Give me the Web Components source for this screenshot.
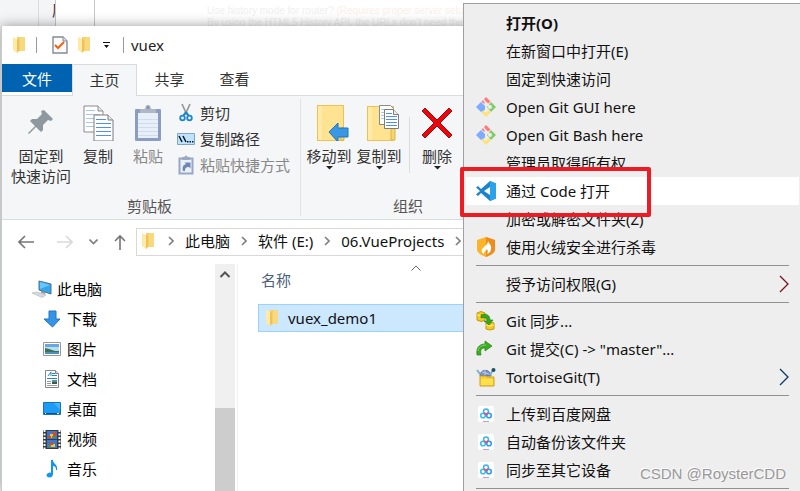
<!DOCTYPE html>
<html lang="zh-CN">
<head>
<meta charset="utf-8">
<meta name="viewport" content="width=device-width, initial-scale=1">
<title>vuex</title>
<style>
    body {
        margin: 0;
        font: 15px/20px "Noto Sans", "Noto Sans CJK SC", sans-serif;
        color: #111;
        background: #fff;
    }
</style>
</head>
<body>
<desktop-stage>
    <page-backdrop slot="backdrop">
        <span slot="fragment">原</span>
        <span slot="question">Use history mode for router? </span>
        <span slot="note">(Requires proper server setup</span>
        <span slot="hint">By using the HTML5 History API, the URLs don't need the</span>
    </page-backdrop>

    <explorer-window>
        <title-bar slot="title">vuex</title-bar>
        <ribbon-tabs slot="tabs"></ribbon-tabs>

        <ribbon-group slot="ribbon" label="剪贴板">
            <ribbon-button icon="pin" wide>固定到<br>快速访问</ribbon-button>
            <ribbon-button icon="copy">复制</ribbon-button>
            <ribbon-button icon="paste" disabled>粘贴</ribbon-button>
            <ribbon-stack>
                <ribbon-button small icon="cut">剪切</ribbon-button>
                <ribbon-button small icon="path">复制路径</ribbon-button>
                <ribbon-button small icon="shortcut" disabled>粘贴快捷方式</ribbon-button>
            </ribbon-stack>
        </ribbon-group>
        <ribbon-group slot="ribbon" label="组织">
            <ribbon-button icon="moveTo" drop>移动到</ribbon-button>
            <ribbon-button icon="copyTo" drop>复制到</ribbon-button>
            <ribbon-rule></ribbon-rule>
            <ribbon-button icon="delete" drop>删除</ribbon-button>
            <ribbon-button></ribbon-button>
        </ribbon-group>

        <address-bar slot="address"></address-bar>

        <nav-tree slot="tree">
            <tree-item icon="computer" root>此电脑</tree-item>
            <tree-item icon="download">下载</tree-item>
            <tree-item icon="picture">图片</tree-item>
            <tree-item icon="document">文档</tree-item>
            <tree-item icon="desktop">桌面</tree-item>
            <tree-item icon="video">视频</tree-item>
            <tree-item icon="music">音乐</tree-item>
        </nav-tree>

        <file-list slot="files"></file-list>
    </explorer-window>

    <context-menu slot="menu">
        <menu-item strong>打开(O)</menu-item>
        <menu-item>在新窗口中打开(E)</menu-item>
        <menu-item>固定到快速访问</menu-item>
        <menu-item icon="git">Open Git GUI here</menu-item>
        <menu-item icon="git">Open Git Bash here</menu-item>
        <menu-item>管理员取得所有权</menu-item>
        <menu-item icon="code" active>通过 Code 打开</menu-item>
        <menu-item>加密或解密文件夹(Z)</menu-item>
        <menu-item icon="shield">使用火绒安全进行杀毒</menu-item>
        <menu-rule></menu-rule>
        <menu-item submenu="#7a1420">授予访问权限(G)</menu-item>
        <menu-rule></menu-rule>
        <menu-item icon="sync">Git 同步...</menu-item>
        <menu-item icon="commit">Git 提交(C) -&gt; "master"...</menu-item>
        <menu-item icon="tortoise" submenu="#0b3a66">TortoiseGit(T)</menu-item>
        <menu-rule></menu-rule>
        <menu-item icon="netdisk">上传到百度网盘</menu-item>
        <menu-item icon="netdisk">自动备份该文件夹</menu-item>
        <menu-item icon="netdisk">同步至其它设备</menu-item>
        <menu-rule></menu-rule>
    </context-menu>

    <image-credit slot="credit">CSDN @RoysterCDD</image-credit>
</desktop-stage>

<script>
// [width, height, markup]
const ICONS = {
    folder: [13, 18, `
        <path d="M4 1h8v14H4z" fill="#f5cf6b"/>
        <path d="M7 1h5v14H7z" fill="#f9d97d"/>
        <path d="M0 1l4 2v14l-4-3z" fill="#ffe9a6"/>
        <path d="M4 3v14l2-2V4z" fill="#eec25a"/>`],
    check: [16, 18, `
        <path d="M1 1h10l4 4v12H1z" fill="#fbfbfb" stroke="#858b94" stroke-width="1.4"/>
        <path d="M11 1v4h4" fill="#dfe3e8" stroke="#858b94"/>
        <path d="M3 9l3 3 6-6" fill="none" stroke="#f06010" stroke-width="2"/>`],
    quickDrop: [7, 7, `<path d="M0 0h7v1H0zM1 3h5L3.500 6z" fill="#111"/>`],
    drop: [7, 4, `<path d="M0 0h7L3.500 3.500z" fill="#222"/>`],
    pin: [26, 36, `
        <path d="M16 5l9 9-2 2-3-1-5 5 0 5-2 2-5-5-7 7-1-1 7-7-5-5 2-2 5 0 5-5-1-3z" fill="#8d989f"/>`],
    copy: [32, 36, `
        <path d="M2 1h14l5 5v21H2z" fill="#fff" stroke="#8b8b8b"/>
        <path d="M16 1v5h5" fill="#e8e8e8" stroke="#8b8b8b"/>
        <path d="M4 5.500h9M4 9.500h14M4 13.500h14M4 17.500h14M4 21.500h14" stroke="#a9c6f5"/>
        <path d="M12 10h14l5 5v21H12z" fill="#fff" stroke="#7d7d7d"/>
        <path d="M26 10v5h5" fill="#e8e8e8" stroke="#7d7d7d"/>
        <path d="M14 14.500h10M14 18.500h15M14 22.500h15M14 26.500h15M14 30.500h15" stroke="#4f8fee"/>`],
    paste: [28, 36, `
        <rect x="1" y="4" width="26" height="32" rx="1" fill="#8b9dc3"/>
        <path d="M4 8h20v25H4z" fill="#e9eff8"/>
        <path d="M4 14.500h20M4 18.500h20M4 22.500h20M4 26.500h20M4 30.500h20" stroke="#d0dcee"/>
        <path d="M6 4h4l2-1h4l2 1h4v4H6z" fill="#b0b8c6"/>
        <circle cx="14" cy="2.500" r="2.500" fill="#a3abc0"/>
        <circle cx="14" cy="2.500" r="1" fill="#6f83ae"/>`],
    cut: [18, 20, `
        <path d="M5 1l5 11M13 1L8 12" stroke="#9b9b9b" stroke-width="1.800" fill="none"/>
        <path d="M9 9l-3 4M9 9l3 4" stroke="#1a87cc" stroke-width="2" fill="none"/>
        <circle cx="5.500" cy="15" r="2.300" fill="none" stroke="#1a87cc" stroke-width="1.800"/>
        <circle cx="12.500" cy="15" r="2.300" fill="none" stroke="#1a87cc" stroke-width="1.800"/>`],
    path: [18, 12, `
        <path d="M.5.5h17v11H.5z" fill="#bfe3fb" stroke="#7fa6c4"/>
        <path d="M2 3l3 6M6 3l3 6" stroke="#0c1a26" stroke-width="1.500"/>
        <path d="M10 8h1.500v1.500H10zM12.500 8H14v1.500h-1.500zM15 8h1.500v1.500H15z" fill="#0c1a26"/>`],
    shortcut: [18, 20, `
        <path d="M2.500 3.500h13v15h-13z" fill="#eaf0f8" stroke="#98a7c4" stroke-width="2"/>
        <path d="M5 2h2.500a1.500 1.500 0 0 1 3 0H13v3H5z" fill="#9ba9c4"/>
        <path d="M6 16c-1-4 0-6 3-7L7.500 7.500h6v6L12 12c-3 0-4 1-4 4z" fill="#6f86b5"/>`],
    moveTo: [40, 36, `
        <path d="M8 0h27v36H8z" fill="#e9c455"/><path d="M9 1h25v34H9z" fill="#ffe391"/>
        <path d="M9 1h4v34H9z" fill="#ffeaa8"/>
        <path d="M31 35V24l3-2 1 1v12z" fill="#f6d470" stroke="#dcb544"/>
        <path d="M20 27l9-9v5h10v9H29v5z" fill="#3a97e4" stroke="#1f74bd"/>`],
    copyTo: [40, 36, `
        <path d="M8 1h27v35H8z" fill="#e9c455"/><path d="M9 2h25v33H9z" fill="#ffe391"/>
        <path d="M9 2h4v33H9z" fill="#ffeaa8"/>
        <path d="M32 35V25q2-4 4-1v11z" fill="#f6d470" stroke="#dcb544"/>
        <path d="M20.500.5h11l3 3v16h-14z" fill="#fff" stroke="#8b8b8b"/>
        <path d="M22 4.500h7M22 7.500h9M22 10.500h9M22 13.500h9" stroke="#a9c6f5"/>
        <path d="M25.500 4.500h9l5 5v14h-14z" fill="#fff" stroke="#7d7d7d"/>
        <path d="M34.500 4.500v5h5" fill="#eee" stroke="#7d7d7d"/>
        <path d="M27 8.500h6M27 11.500h11M27 14.500h11M27 17.500h11M27 20.500h11" stroke="#4f8fee"/>`],
    delete: [32, 36, `
        <path d="M4 3l12 12L28 3l3 3-12 12 12 12-3 3-12-12L4 33l-3-3 12-12L1 6z" fill="#e8080c" stroke="#a8090d"/>`],
    back: [16, 14, `<path d="M7 1L1 7l6 6M1 7h15" fill="none" stroke="#757575" stroke-width="1.600"/>`],
    forward: [16, 14, `<path d="M9 1l6 6-6 6M15 7H0" fill="none" stroke="#d9d9d9" stroke-width="1.600"/>`],
    recent: [9, 6, `<path d="M.5.5l4 4 4-4" fill="none" stroke="#808080" stroke-width="1.600"/>`],
    up: [12, 16, `<path d="M1 7l5-5 5 5M6 2v14" fill="none" stroke="#757575" stroke-width="1.600"/>`],
    crumb: [6, 10, `<path d="M1 1l4 4-4 4" fill="none" stroke="#808080" stroke-width="1.600"/>`],
    scrollUp: [12, 8, `<path d="M1.500 7L6 2.500 10.500 7" fill="none" stroke="#555" stroke-width="2"/>`],
    sort: [10, 6, `<path d="M.5 5.500L5 1l4.500 4.500" fill="none" stroke="#666"/>`],
    computer: [20, 18, `
        <path d="M7 1l12 3v10L7 10z" fill="#35a6ee" stroke="#4d7088"/>
        <path d="M8 2l10 3-10 4z" fill="#67c6fb"/>
        <path d="M9 11l5 1-1 2-4-1z" fill="#8f9aa3"/>
        <path d="M0 13l5-1 9 3-4 2.500z" fill="#d4dadf" stroke="#adb5bb" stroke-width=".6"/>`],
    download: [18, 18, `<path d="M6 1h7v8h4l-7.500 8L1 9h5z" fill="#3494e6" stroke="#2373c2"/>`],
    picture: [18, 14, `
        <path d="M.5.5h17v13H.5z" fill="#fff" stroke="#999"/>
        <path d="M2 2h14v10H2z" fill="#b5ddf5"/><path d="M2 2h14v3H2z" fill="#6aa6e0"/>
        <path d="M2 6l4 1 6 2 4 0v1H2z" fill="#3f7156"/>
        <path d="M2 10h14v2H2z" fill="#4f92b9"/>`],
    document: [16, 18, `
        <path d="M1.500.5h10l3 3v14h-13z" fill="#fff" stroke="#858585"/>
        <path d="M11.500.5v3h3" fill="#ddd" stroke="#858585"/>
        <path d="M4 6l3-4v4M8 3.500h3M8 5.500h5M3 8.500h10" stroke="#2182d2" fill="none"/>
        <path d="M3 11.500h4M3 13.500h4M3 15.500h10" stroke="#999"/>
        <path d="M8 10h5v4H8z" fill="#598cb0"/><path d="M8 12h5v2H8z" fill="#395f45"/>`],
    desktop: [18, 14, `
        <path d="M.5.5h17v12H.5z" fill="#1c9cf5" stroke="#1873b5"/>
        <path d="M11 1h6v7z" fill="#43b5ff"/>
        <path d="M1 11h16v1H1z" fill="#0c5186"/>
        <path d="M2 11.500h1M14 11.500h2" stroke="#fff"/>`],
    video: [18, 19, `
        <path d="M0 0h18v19H0z" fill="#3b3b3b"/>
        <path d="M1.500 0v19M16.500 0v19" stroke="#fff" stroke-width="2" stroke-dasharray="2 1.500"/>
        <path d="M4 1h10v8H4zM4 10h10v8H4z" fill="#3f77cc"/>
        <path d="M7 4h4v4H7zM8 14h4v3H8z" fill="#ecc72e"/>
        <path d="M10 2h3v4h-3zM5 6h3v2H5zM7 12h3v3H7z" fill="#d54535"/>
        <path d="M9 6h3v2H9zM5 15h3v2H5z" fill="#4d9a3a"/>`],
    music: [14, 18, `
        <path d="M6 0h2c0 4 5 4 4 10h-1c0-3-1-4-3-4v8c0 5-7 4-6.500 1C2 13 5 12 6 13z" fill="#1295ef"/>`],
    git: [20, 20, `
        <path d="M10 0l4.500 4.500-4.500 4-4.500-4z" fill="#ff7b7b"/>
        <path d="M0 10l5-5 4 4v5l-4 1z" fill="#7bacff"/>
        <path d="M15 5l5 5-5 5-4-5z" fill="#82cc68"/>
        <path d="M5 15l5-3 5 3-5 5z" fill="#ffe07a"/>
        <path d="M7 2l3 4 5 4M10 6v9" fill="none" stroke="#eee" stroke-width="1.500"/>
        <circle cx="10" cy="6.500" r="1.500" fill="#eee"/><circle cx="14" cy="10" r="2" fill="#eee"/>
        <circle cx="10" cy="14" r="1.800" fill="#eee"/>`],
    code: [20, 20, `
        <path d="M14 0l6 2.500v15L14 20 5 12l-3 3-2-1.500L4 10 0 6.500 2 5l3 3z" fill="#1a85cc"/>
        <path d="M14 0l6 2.500v15L14 20z" fill="#2ba3ea"/>
        <path d="M14 6v8l-6-4z" fill="#fff"/>`],
    shield: [18, 20, `
        <path d="M9 0l9 3v9c0 4-4 6-9 8-5-2-9-4-9-8V3z" fill="#fbb42a"/>
        <path d="M9 0l9 3v9c0 4-4 6-9 8z" fill="#f08c1c"/>
        <path d="M11 4c1 3 4 4 3 8 0 3-2 4-4 5 1-2 1-3 0-5-1 2-3 2-3 5-4-3-2-5 0-7 1-1 4-3 4-6z" fill="#fff"/>`],
    sync: [20, 20, `
        <path d="M1 2q4-3 8 0v7q-4 3-8 0z" fill="#f3cb20" stroke="#c49a14"/>
        <path d="M10 12q4-3 8 0v6q-4 2-8 0z" fill="#f3cb20" stroke="#c49a14"/>
        <path d="M1 4q4 2 8 0M10 14q4 2 8 0" stroke="#fff08b" fill="none"/>
        <path d="M5 4c5-2 9 0 9 5h3l-4 5-5-4h3c0-3-2-4-6-3z" fill="#35a91d" stroke="#21770f" stroke-width=".6"/>`],
    commit: [20, 20, `
        <path d="M1 16C0 9 3 5 9 5V2l7 5-7 5V9c-4 0-5 2-4 7z" fill="#3aae20" stroke="#2a7c1b" stroke-width=".7"/>
        <path d="M2 12c1-4 3-6 8-6" fill="none" stroke="#7adc62"/>`],
    tortoise: [20, 20, `
        <path d="M4 9c0-7 10-8 11 0z" fill="#7896cd" stroke="#5a6f97"/>
        <path d="M9 3v5M6 5l7 2" stroke="#b9c9ea"/>
        <path d="M1 3l3 4M14 8l3-5" stroke="#82add1" stroke-width="2"/>
        <circle cx="17.500" cy="3" r="2" fill="#1f5166"/>
        <path d="M4 9h6l1 1h7v9H4z" fill="#f7cf37" stroke="#cfa11e"/>
        <path d="M5 12h12v6H5z" fill="#ffdf4d"/>`],
    netdisk: [16, 16, `
        <rect width="16" height="16" rx="2" fill="#fff"/>
        <circle cx="8" cy="5.500" r="2.400" fill="none" stroke="#3eb2f4" stroke-width="1.500"/>
        <circle cx="5" cy="9.500" r="2.300" fill="none" stroke="#35bff2" stroke-width="1.600"/>
        <circle cx="11" cy="9.500" r="2.300" fill="none" stroke="#2f9bf0" stroke-width="1.600"/>
        <path d="M6 7l2 1.500L10 7" fill="none" stroke="#f0506a" stroke-width="1.600"/>
        <path d="M5 15.500h3" stroke="#f58a9a"/><path d="M8 15.500h3" stroke="#7fb9f5"/>`]
};

function icon(name) {
    if (!ICONS[name]) return '';
    const [w, h, body] = ICONS[name];
    return `<svg width="${w}" height="${h}" viewBox="0 0 ${w} ${h}" aria-hidden="true">${body}</svg>`;
}

class BaseElement extends HTMLElement {
    constructor() {
        super();
        this.attachShadow({ mode: 'open' });
    }

    connectedCallback() {
        this.shadowRoot.innerHTML = `
            <style>
                *, *::before, *::after { box-sizing: border-box; }
                button { font: inherit; color: inherit; background: none; border: 0; padding: 0; margin: 0; text-align: inherit; }
                svg { display: block; flex: none; }
            </style>
            ${this.render()}
        `;
    }
}

class DesktopStage extends BaseElement {
    render() {
        return `
            <style>
                :host {
                    display: grid;
                    position: relative;
                    min-height: 100vh;
                    max-height: 100vh;
                    overflow: hidden;
                }

                .backdrop,
                .window {
                    grid-area: 1 / 1;
                    min-width: 0;
                    display: grid;
                }

                .window {
                    margin: 26px 0 0 1px;
                    z-index: 1;
                }

                .menu {
                    position: absolute;
                    z-index: 2;
                    top: 3px;
                    left: 463px;
                    right: 0;
                }

                .credit {
                    position: absolute;
                    z-index: 3;
                    right: 14px;
                    bottom: 7px;
                }
            </style>
            <div class="backdrop"><slot name="backdrop"></slot></div>
            <main class="window"><slot></slot></main>
            <div class="menu"><slot name="menu"></slot></div>
            <div class="credit"><slot name="credit"></slot></div>
        `;
    }
}

class PageBackdrop extends BaseElement {
    render() {
        return `
            <style>
                :host {
                    display: grid;
                    grid-template-columns: 39px 17px 39px 1fr;
                    background: #fff;
                    overflow: hidden;
                    white-space: nowrap;
                }

                .rail { background: #f4f5f7; border-right: 1px solid #dcdde0; }
                .gutter { background: #f4f5f7; border-right: 1px solid #c8c8c8; overflow: hidden; padding-left: 13px; color: #4a2540; }
                .margin { border-right: 1px solid #c8c8c8; }
                .text { padding: 5px 0 0 112px; font: 10px/12px "Liberation Sans", sans-serif; color: #f0f0f0; }
                .note { color: #fbf0ea; }
            </style>
            <div class="rail"></div>
            <div class="gutter"><slot name="fragment"></slot></div>
            <div class="margin"></div>
            <div class="text">
                <div><slot name="question"></slot><span class="note"><slot name="note"></slot></span></div>
                <div><slot name="hint"></slot></div>
            </div>
        `;
    }
}

class ExplorerWindow extends BaseElement {
    render() {
        return `
            <style>
                :host {
                    display: grid;
                    grid-template-rows: auto auto auto auto 1fr;
                    min-width: 0;
                    background: #fff;
                    border-left: 1px solid #c9c9c9;
                    box-shadow: 0 0 12px rgba(0, 0, 0, 0.4);
                }

                .ribbon {
                    display: flex;
                    height: 124px;
                    background: #f5f6f7;
                    border-bottom: 1px solid #dadbdc;
                }

                .body {
                    display: grid;
                    grid-template-columns: 236px 1fr;
                    overflow: hidden;
                }
            </style>
            <slot name="title"></slot>
            <slot name="tabs"></slot>
            <div class="ribbon"><slot name="ribbon"></slot></div>
            <slot name="address"></slot>
            <div class="body">
                <slot name="tree"></slot>
                <slot name="files"></slot>
            </div>
        `;
    }
}

class TitleBar extends BaseElement {
    render() {
        return `
            <style>
                :host {
                    display: flex;
                    align-items: center;
                    height: 38px;
                    padding-left: 11px;
                    color: #222;
                }

                button { margin-right: 10px; }
                .drop { margin: 0 13px 0 2px; }
                .rule { width: 1px; height: 16px; background: #999; }
                .gap { margin-right: 15px; }
                h1 { margin: 0 0 0 7px; font: inherit; }
            </style>
            <button aria-label="窗口">${icon('folder')}</button>
            <span class="rule gap"></span>
            <button aria-label="属性">${icon('check')}</button>
            <button aria-label="新建文件夹">${icon('folder')}</button>
            <button class="drop" aria-label="自定义快速访问工具栏">${icon('quickDrop')}</button>
            <span class="rule"></span>
            <h1><slot></slot></h1>
        `;
    }
}

class RibbonTabs extends BaseElement {
    render() {
        return `
            <style>
                :host {
                    display: flex;
                    height: 32px;
                    color: #333;
                }

                button {
                    width: 65px;
                    padding-bottom: 2px;
                    text-align: center;
                    border-bottom: 1px solid #dadbdc;
                }

                .file {
                    width: 70px;
                    color: #fff;
                    background: linear-gradient(#0063b1 28px, #fff 28px);
                }

                .current {
                    background: #f5f6f7;
                    border: 1px solid #dadbdc;
                    border-bottom: 0;
                }

                .rest { flex: 1; border-bottom: 1px solid #dadbdc; }
            </style>
            <button class="file">文件</button>
            <button class="current">主页</button>
            <button>共享</button>
            <button>查看</button>
            <span class="rest"></span>
        `;
    }
}

class RibbonGroup extends BaseElement {
    render() {
        return `
            <style>
                :host {
                    display: grid;
                    grid-template-rows: 1fr 20px;
                    margin: 3px 0;
                    padding: 0 4px 0 3px;
                    border-right: 1px solid #e2e3e4;
                }

                :host(:first-of-type) { padding: 0 10px 0 7px; }
                .items { display: flex; }
                .label { text-align: center; color: #555; }
            </style>
            <div class="items"><slot></slot></div>
            <div class="label">${this.getAttribute('label')}</div>
        `;
    }
}

class RibbonStack extends BaseElement {
    render() {
        return `
            <style>
                :host { display: flex; flex-direction: column; margin: 1px 0 0 4px; }
            </style>
            <slot></slot>
        `;
    }
}

class RibbonRule extends BaseElement {
    render() {
        return `
            <style>
                :host { display: block; width: 1px; height: 56px; margin: 18px 2px 0 5px; background: #dcdddf; }
            </style>
        `;
    }
}

class RibbonButton extends BaseElement {
    render() {
        const disabled = this.hasAttribute('disabled') ? 'disabled' : '';
        return `
            <style>
                :host { display: block; width: 50px; color: #333; white-space: nowrap; }
                :host([wide]) { width: 64px; }
                :host([small]) { width: auto; }
                :host([disabled]) { color: #888; }

                button {
                    display: flex;
                    flex-direction: column;
                    align-items: center;
                    width: 100%;
                    padding-top: 6px;
                    text-align: center;
                }

                button > svg:first-child { margin-bottom: 5px; }

                :host([small]) button {
                    flex-direction: row;
                    gap: 5px;
                    height: 26px;
                    padding: 0;
                }

                :host([small]) svg:first-child { margin: 0; }
            </style>
            <button ${disabled}>
                ${icon(this.getAttribute('icon'))}
                <span><slot></slot></span>
                ${this.hasAttribute('drop') ? icon('drop') : ''}
            </button>
        `;
    }
}

class AddressBar extends BaseElement {
    render() {
        return `
            <style>
                :host {
                    display: flex;
                    align-items: center;
                    height: 44px;
                    padding-left: 16px;
                }

                .tool { margin-right: 10px; }
                .tool.far { margin-right: 23px; }
                .tool.near { margin-right: 16px; }

                nav {
                    display: flex;
                    align-items: center;
                    flex: 1;
                    gap: 11px;
                    height: 28px;
                    padding-left: 5px;
                    padding-bottom: 2px;
                    border: 1px solid #d9d9d9;
                    white-space: nowrap;
                }

                nav svg:first-child { margin-right: 2px; }
                a { color: inherit; text-decoration: none; }
            </style>
            <button class="tool far" aria-label="后退">${icon('back')}</button>
            <button class="tool near" aria-label="前进">${icon('forward')}</button>
            <button class="tool near" aria-label="最近位置">${icon('recent')}</button>
            <button class="tool" aria-label="上移">${icon('up')}</button>
            <nav aria-label="地址">
                ${icon('folder')}
                ${icon('crumb')}<a href="#pc">此电脑</a>
                ${icon('crumb')}<a href="#e">软件 (E:)</a>
                ${icon('crumb')}<a href="#projects">06.VueProjects</a>
                ${icon('crumb')}
            </nav>
        `;
    }
}

class NavTree extends BaseElement {
    render() {
        return `
            <style>
                :host {
                    display: grid;
                    grid-template-columns: 1fr 20px 2px;
                    border-right: 1px solid #f0f0f0;
                }

                nav { padding-top: 10px; }

                .scroll {
                    display: grid;
                    grid-template-rows: 144px 1fr;
                    justify-items: center;
                    background: #f0f0f0;
                }

                .scroll svg { margin-top: 6px; }
                .thumb { width: 100%; background: #cdcdcd; }
            </style>
            <nav><slot></slot></nav>
            <div class="scroll">${icon('scrollUp')}<span class="thumb"></span></div>
        `;
    }
}

class TreeItem extends BaseElement {
    render() {
        return `
            <style>
                :host { display: block; }

                a {
                    display: flex;
                    align-items: center;
                    gap: 5px;
                    height: 30px;
                    padding-left: 40px;
                    color: #000;
                    text-decoration: none;
                }

                :host([root]) a { padding-left: 30px; }
                .icon { display: flex; justify-content: center; width: 20px; }
            </style>
            <a href="#"><span class="icon">${icon(this.getAttribute('icon'))}</span><slot></slot></a>
        `;
    }
}

class FileList extends BaseElement {
    render() {
        return `
            <style>
                :host { display: block; padding-left: 20px; }
                table { width: 100%; border-collapse: collapse; }

                th {
                    position: relative;
                    height: 40px;
                    padding: 0 0 14px 3px;
                    font-weight: normal;
                    text-align: left;
                    vertical-align: bottom;
                    color: #4c607a;
                }

                /* sort direction marker sits above the column title */
                th svg { position: absolute; top: 1px; left: 153px; }

                .name {
                    display: flex;
                    align-items: center;
                    gap: 9px;
                    height: 28px;
                    padding-left: 7px;
                    background: #cce8ff;
                    border: 1px solid #99d1ff;
                    color: #111;
                }

                td { padding: 0; }
            </style>
            <table>
                <thead><tr><th>名称${icon('sort')}</th></tr></thead>
                <tbody><tr><td><div class="name">${icon('folder')}<span>vuex_demo1</span></div></td></tr></tbody>
            </table>
        `;
    }
}

class ContextMenu extends BaseElement {
    render() {
        return `
            <style>
                :host {
                    display: block;
                    padding: 5px 1px 5px 2px;
                    background: #eee;
                    border: 1px solid #a0a0a0;
                    border-right: 0;
                    color: #111;
                }
            </style>
            <div role="menu"><slot></slot></div>
        `;
    }
}

class MenuRule extends BaseElement {
    render() {
        return `
            <style>
                :host { display: block; padding: 4px 10px; }
                hr { margin: 0; border: 0; height: 1px; background: #919191; }
            </style>
            <hr>
        `;
    }
}

class MenuItem extends BaseElement {
    render() {
        const arrow = this.getAttribute('submenu');
        return `
            <style>
                :host { display: block; position: relative; }
                :host([strong]) { font-weight: bold; }
                :host([active]) { background: #fff; z-index: 1; }

                button {
                    display: flex;
                    align-items: center;
                    gap: 10px;
                    width: 100%;
                    height: 28px;
                    padding: 0 10px;
                    white-space: nowrap;
                }

                .icon { display: flex; justify-content: center; width: 20px; }
                .label { flex: 1; }

                /* callout ring drawn over the neighbouring rows */
                :host([active])::after {
                    content: "";
                    position: absolute;
                    box-sizing: border-box;
                    top: -10px;
                    left: -6px;
                    width: 191px;
                    height: 50px;
                    border: 4px solid #ed1c24;
                    border-radius: 2px;
                    pointer-events: none;
                }
            </style>
            <button role="menuitem">
                <span class="icon">${icon(this.getAttribute('icon'))}</span>
                <span class="label"><slot></slot></span>
                ${arrow ? `<svg width="10" height="18" viewBox="0 0 10 18" aria-hidden="true"><path d="M1 1l8 8-8 8" fill="none" stroke="${arrow}" stroke-width="1.300"/></svg>` : ''}
            </button>
        `;
    }
}

class ImageCredit extends BaseElement {
    render() {
        return `
            <style>
                :host {
                    display: block;
                    font: 15px/20px "Liberation Sans", sans-serif;
                    color: #999;
                    text-shadow: -1px -1px 0 #fff;
                }
            </style>
            <slot></slot>
        `;
    }
}

customElements.define('desktop-stage', DesktopStage);
customElements.define('page-backdrop', PageBackdrop);
customElements.define('explorer-window', ExplorerWindow);
customElements.define('title-bar', TitleBar);
customElements.define('ribbon-tabs', RibbonTabs);
customElements.define('ribbon-group', RibbonGroup);
customElements.define('ribbon-stack', RibbonStack);
customElements.define('ribbon-rule', RibbonRule);
customElements.define('ribbon-button', RibbonButton);
customElements.define('address-bar', AddressBar);
customElements.define('nav-tree', NavTree);
customElements.define('tree-item', TreeItem);
customElements.define('file-list', FileList);
customElements.define('context-menu', ContextMenu);
customElements.define('menu-rule', MenuRule);
customElements.define('menu-item', MenuItem);
customElements.define('image-credit', ImageCredit);
</script>
</body>
</html>
